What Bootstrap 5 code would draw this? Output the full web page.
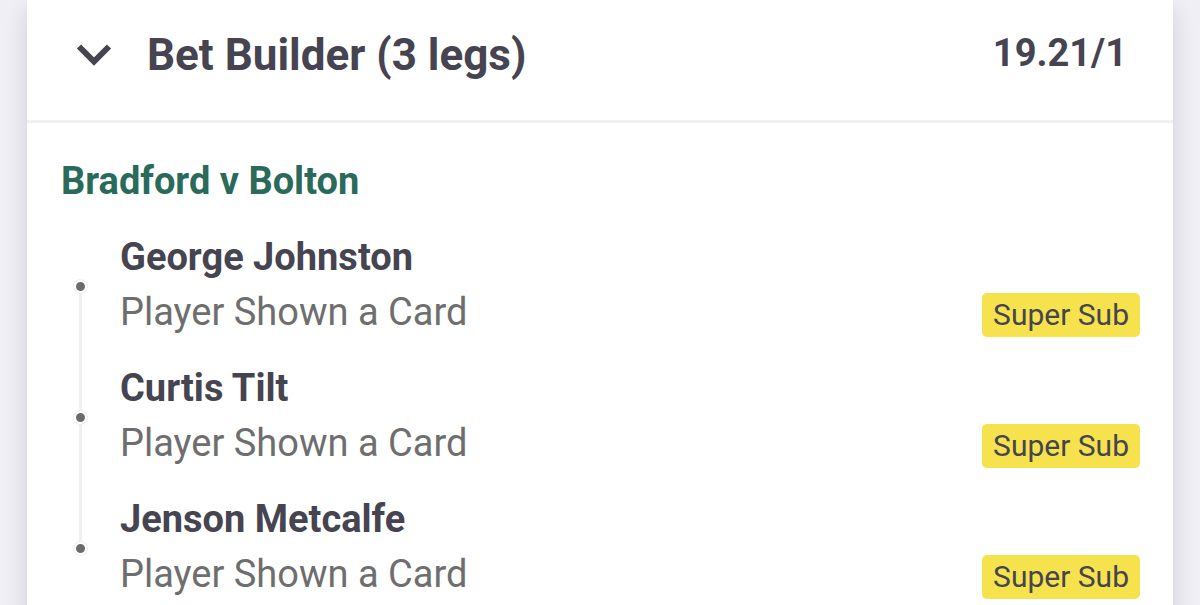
<!DOCTYPE html>
<html lang="en">
<head>
<meta charset="utf-8">
<meta name="viewport" content="width=device-width, initial-scale=1">
<title>Bet Builder</title>
<link href="https://cdn.jsdelivr.net/npm/bootstrap@5.3.0/dist/css/bootstrap.min.css" rel="stylesheet">
<style>
body{background:#f0eff5;font-family:Roboto,sans-serif;color:#454450}
.slip{background:#fff;margin:0 27px;box-shadow:0 10px 20px rgba(60,55,90,.18)}
.slip-head{border-bottom:3px solid #f0f0f1;padding:25px 46px 35px 48px}
.slip-title{font-size:44px;line-height:60px;font-weight:700;padding-left:34px}
.odds{font-size:38px;line-height:56px;font-weight:700}
.toggle{width:38px;height:60px;color:#454450}
.event{font-size:38px;line-height:48px;font-weight:700;color:#2a6a5b;padding:34px 0 0 34px}
.legs{padding:24px 33px 0 33px}
.leg{font-size:38px;padding-bottom:20px}
.player{line-height:56px}
.marker{width:40px;position:relative;margin-right:20px}
.marker::before{content:"";position:absolute;left:14px;top:51px;width:13px;height:13px;border-radius:50%;background:#6b6b6b;border:2px solid #fff;box-shadow:0 0 0 1px #f0f0f4;z-index:1}
.leg:not(:last-child) .marker::after{content:"";position:absolute;left:19px;top:57px;width:3px;height:calc(100% + 20px);background:#f0f0f4}
.market{color:#6e6e6e;line-height:55px}
.tag{background:#f6e24c;border-radius:5px;font-size:30px;line-height:44px;padding:0 11px;margin-top:4px}
</style>
</head>
<body>
<main class="slip">
<header class="slip-head d-flex justify-content-between align-items-start">
<div class="d-flex">
<button class="toggle btn p-0 border-0 d-flex align-items-center" type="button" aria-label="Collapse bet" aria-expanded="true"><svg width="38" height="26" viewBox="0 0 38 26" fill="none" stroke="currentColor" stroke-width="6"><path d="M4 4.5L19 19.5L34 4.5"/></svg></button>
<h1 class="slip-title m-0">Bet Builder (3 legs)</h1>
</div>
<span class="odds">19.21/1</span>
</header>
<h2 class="event m-0">Bradford v Bolton</h2>
<ul class="legs list-unstyled m-0">
<li class="leg d-flex"><span class="marker"></span><div class="flex-grow-1"><div class="player fw-bold">George Johnston</div><div class="d-flex justify-content-between align-items-center"><span class="market">Player Shown a Card</span><span class="tag">Super Sub</span></div></div></li>
<li class="leg d-flex"><span class="marker"></span><div class="flex-grow-1"><div class="player fw-bold">Curtis Tilt</div><div class="d-flex justify-content-between align-items-center"><span class="market">Player Shown a Card</span><span class="tag">Super Sub</span></div></div></li>
<li class="leg d-flex"><span class="marker"></span><div class="flex-grow-1"><div class="player fw-bold">Jenson Metcalfe</div><div class="d-flex justify-content-between align-items-center"><span class="market">Player Shown a Card</span><span class="tag">Super Sub</span></div></div></li>
</ul>
</main>
<script src="https://cdn.jsdelivr.net/npm/bootstrap@5.3.0/dist/js/bootstrap.bundle.min.js"></script>
</body>
</html>
